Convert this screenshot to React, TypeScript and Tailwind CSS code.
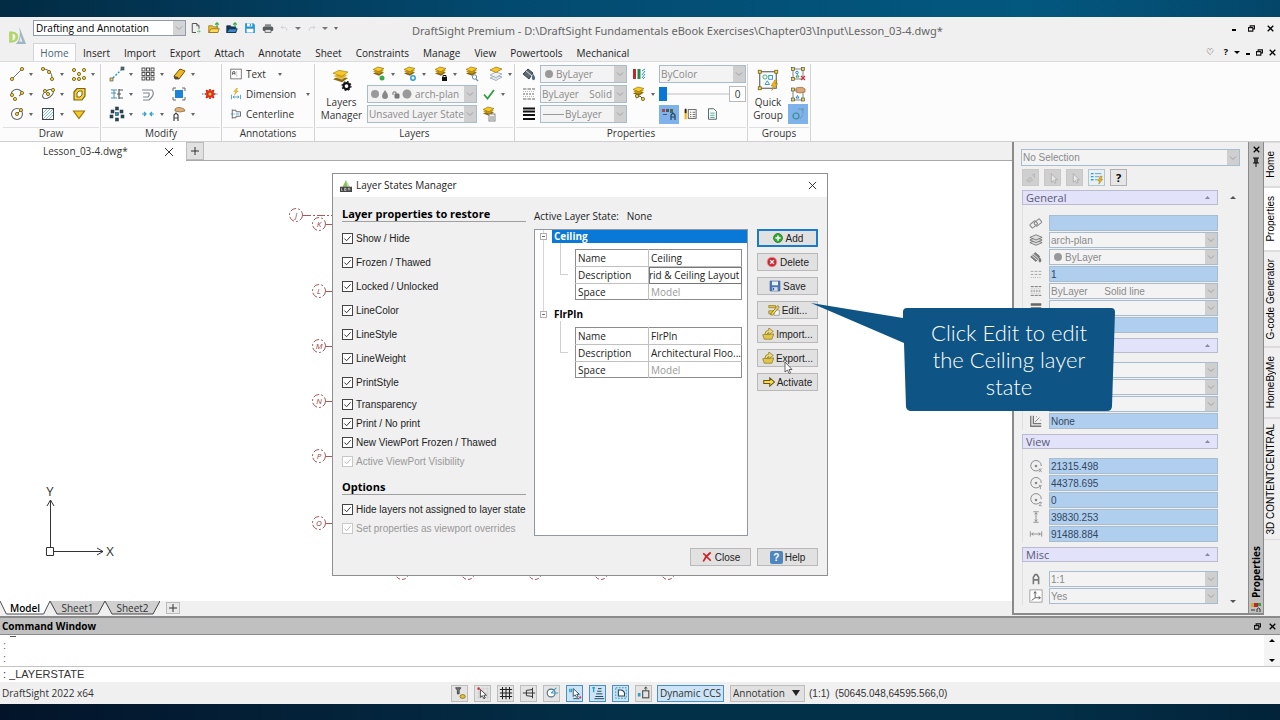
import React from 'react';
import clsx from 'clsx';

/* ---------- icons ---------- */

interface IconProps {
  name: string;
  className?: string;
}

const node = (x: number, y: number) => (
  <circle cx={x} cy={y} r="1.6" fill="#f3d34a" stroke="#75651c" strokeWidth="0.9" />
);

const sq = (x: number, y: number, fill = '#5b6b7a') => (
  <rect x={x} y={y} width="3" height="3" fill={fill} stroke="#34424e" strokeWidth="0.6" />
);

const stack = (
  <>
    <path d="M2 7.5 7 5l6 1.5-5 3.2z" fill="#8a6a10" />
    <path d="M2 5.5 7 3l6 1.5-5 3.2z" fill="#c9970f" />
    <path d="M2 3.5 7 1l6 1.5-5 3.2z" fill="#f6c927" stroke="#9a7410" strokeWidth="0.7" />
  </>
);

const icons: Record<string, React.ReactNode> = {
  line: <><path d="M3 13 13 3" stroke="#777" />{node(3, 13)}{node(13, 3)}</>,
  arc: <><path d="M3 3c6 0 9 4 9 9" stroke="#666" fill="none" />{node(3, 3)}{node(9, 6)}{node(12, 13)}</>,
  points: <>{node(3, 4)}{node(8, 8)}{node(13, 4)}{node(3, 13)}{node(8, 13)}{node(13, 12)}</>,
  polyline: <><path d="M3 10C0 5 8 1 12 5c2 3-1 4-2 5" stroke="#666" fill="none" strokeWidth="1.1" />{node(3, 9)}{node(13, 7)}{node(6, 13)}</>,
  ellipse: <><ellipse cx="8" cy="8" rx="6" ry="3.5" transform="rotate(-35 8 8)" fill="none" stroke="#555" strokeWidth="1.1" />{node(8, 8)}{node(13, 4)}{node(5, 5)}</>,
  polygon: <><path d="M3 6 6 2.5h8V10l-3 4H3z" fill="#f6cf3a" stroke="#7a6417" strokeWidth="1.2" /><path d="m6 7 2-2h3v4l-2 2H6z" fill="#fff" stroke="#7a6417" /></>,
  circle: <><circle cx="8" cy="8" r="5.5" fill="none" stroke="#666" strokeWidth="1.1" /><path d="m8 8 4-4" stroke="#555" />{node(8, 8)}{node(12, 4)}</>,
  hatch: <><rect x="2.5" y="2.5" width="11" height="11" fill="#fff" stroke="#444" /><path d="m3 7 4-4M3 10l7-7M3 13 13 3M6 13l7-7M9 13l4-4" stroke="#5cb4d8" strokeWidth="0.8" /></>,
  region: <path d="M2.5 5h11L8 12.5z" fill="#f6c927" stroke="#9a7410" strokeWidth="1.2" />,
  move: <><path d="m4 12 8-8" stroke="#2a8fd0" strokeDasharray="2 1.5" strokeWidth="1.4" />{sq(1, 12, '#f3d34a')}{sq(12, 1)}</>,
  pattern: <g fill="none" stroke="#444" strokeWidth="0.9">{[2, 6.5, 11].map((y) => [2, 6.5, 11].map((x) => <rect key={`${x}-${y}`} x={x} y={y} width="3" height="3" />))}</g>,
  eraser: <><path d="m3 10 6-7 5 2-6 8H4z" fill="#f2b91e" stroke="#6d5210" /><path d="m3 10 4 1 1 2H4z" fill="#4b4b4b" /></>,
  trim: <><path d="M10 3v10M10 4h4M10 12h4M8 8h4" stroke="#555" strokeWidth="1.2" /><path d="M2 4h6M2 7h5M2 12h6M5 4v8" stroke="#4a90b8" /></>,
  offset: <path d="M2 4h10q3 4-1 8l-2 2H3M3 7h6q1 2-1 4H3" fill="none" stroke="#7a858f" strokeWidth="1.1" />,
  stretch: <><rect x="4" y="4" width="8" height="8" fill="#1c83d6" /><path d="M2 5V2h3M11 2h3v3M14 11v3h-3M5 14H2v-3" fill="none" stroke="#666" /></>,
  explode: <><path d="M0 8h3M13 8h3" stroke="#2a6fb0" strokeWidth="1.2" strokeDasharray="1.5 1" /><path d="m8 3 1.2 2.2L12 4l-1 3 2 1-2 1 1 3-2.8-1.2L8 13l-1.2-2.2L4 12l1-3-2-1 2-1-1-3 2.8 1.2z" fill="#e22b17" stroke="#e22b17" /><circle cx="8" cy="8" r="1.5" fill="#f9d342" /></>,
  copy: <>{sq(6.5, 1, '#24435c')}{sq(2, 4, '#24435c')}{sq(11, 4, '#24435c')}{sq(6.5, 6.5, '#2a8fd0')}{sq(1, 9, '#24435c')}{sq(12, 9, '#24435c')}{sq(6.5, 12, '#24435c')}</>,
  join: <path d="M2 8h4M4 6l2 2-2 2M14 8h-4M12 6l-2 2 2 2" stroke="#2a9fc8" strokeWidth="1.2" fill="none" />,
  match: <><path d="M4 3c2-2 5-2 9 0l1 2-5 1-5-1z" fill="#e0b07c" stroke="#8f6638" strokeWidth="0.8" /><path d="M3 15V9l2-2 2 2v6M3 12h4" fill="none" stroke="#444" strokeWidth="1.2" /></>,
  text: <><rect x="1" y="1.5" width="14" height="13" fill="#fff" stroke="#555" /><path d="M3.5 9V5.5L5 4l1.5 1.5V9M3.5 7h3" fill="none" stroke="#333" /><path d="M9 4v8" stroke="#bbb" /></>,
  dimension: <><path d="m9 0-4 5h2.5L6 9l5-5H8.5L10 0z" fill="#f6c927" stroke="#b28912" strokeWidth="0.5" /><path d="M2 9v6M14 9v6M4 12h8M6 10.5 4 12l2 1.5M10 10.5l2 1.5-2 1.5" stroke="#2a8fd0" fill="none" /></>,
  centerline: <><path d="M3 2v12M3 3h5v2h6M3 13h5v-2h6V5" stroke="#555" fill="none" strokeWidth="1.1" /><path d="M1 8h14" stroke="#2a8fd0" strokeDasharray="4 1 1 1" /></>,
  layerOn: <>{stack}<circle cx="11" cy="12" r="2.5" fill="#3aa94a" /></>,
  layerCog: <>{stack}<circle cx="11" cy="12" r="2.2" fill="#fff" stroke="#2a9fd0" strokeWidth="1.5" /></>,
  layerLock: <>{stack}<rect x="9" y="11" width="5" height="4" fill="#111" /><path d="M10 11V9.500h3V11" stroke="#111" fill="none" /></>,
  layerFind: <>{stack}<circle cx="10.5" cy="11" r="2.2" fill="#fff" stroke="#6c8ca0" /><path d="m12 13 2 2" stroke="#6c8ca0" strokeWidth="1.2" /></>,
  layerCopy: <><path d="m2 12 6-3 6 2-6 3.5z" fill="#dfe5ea" stroke="#8d99a5" strokeWidth="0.7" /><path d="m2 9 6-3 6 2-6 3.5z" fill="#eef1f4" stroke="#8d99a5" strokeWidth="0.7" /><path d="m2 4 6-3 6 2-6 3.5z" fill="#f6c927" stroke="#9a7410" strokeWidth="0.7" /></>,
  layerSheet: <>{stack}<rect x="8" y="8" width="6" height="7" fill="#f4f4f4" stroke="#888" /><path d="M10 10v4M12 10v4" stroke="#888" /></>,
  layersBig: (
    <>
      <path d="M2 7.5 6 5.5l6 1.2-4 2.8z" fill="#8a6a10" />
      <path d="M2 5.5 6 3.5l6 1.2-4 2.8z" fill="#e3b11c" stroke="#fff" strokeWidth="0.3" />
      <path d="M2 3.5 6 1.5l6 1.2-4 2.8z" fill="#f6c927" stroke="#9a7410" strokeWidth="0.4" />
      <circle cx="11" cy="12" r="2" fill="none" stroke="#111" strokeWidth="1.5" />
      <circle cx="11" cy="12" r="3" fill="none" stroke="#111" strokeWidth="0.7" strokeDasharray="1.2 1.15" />
    </>
  ),
  check: <path d="m3 8.5 3.5 4L13 4" fill="none" stroke="#2f9e44" strokeWidth="1.8" />,
  bucket: <><path d="m2 8 5-5 5 4-4 6z" fill="#5f6b74" stroke="#3a444b" /><path d="m4 4 7 6" stroke="#dfe3e6" /><path d="M12 8c2 2 3 5 1 6s-3-3-1-6z" fill="#4a6f8c" /></>,
  bucketGrey: <><path d="m2 8 5-5 5 4-4 6z" fill="#858585" stroke="#666" /><path d="m4 4 7 6M3 6l7 6" stroke="#eee" /><path d="M12 8c2 2 3 5 1 6s-3-3-1-6z" fill="#777" /></>,
  lineStyle: <><path d="M2 3h12M2 13h12" stroke="#666" strokeDasharray="3.5 1" /><path d="M2 8h12" stroke="#666" strokeDasharray="2 1" /><path d="M2 5.5h12M2 10.5h12" stroke="#888" strokeWidth="0.6" strokeDasharray="1 1" /></>,
  lineScale: <><path d="M2 5h12M2 8.5h12" stroke="#999" strokeDasharray="3 1.5" /><path d="M2 12h12" stroke="#999" strokeDasharray="1 1.5" /></>,
  lineWeight: <path d="M2 2.5h12M2 5.5h12M2 9h12M2 13h12" stroke="#111" strokeWidth="2" />,
  weightGrey: <path d="M2 4h12M2 8.5h12M2 13h12" stroke="#666" strokeWidth="3" />,
  colors: <><path d="M3.5 3v10" stroke="#c1272d" strokeWidth="3" /><path d="M8 3v10" stroke="#248a4b" strokeWidth="3" /><path d="m11 5 3-2M11 9l3-4M11 12l3-4M12 13l2-2" stroke="#2a8fd0" /></>,
  layerNodes: <>{stack}<path d="m5 12 4-2 3 3" stroke="#555" fill="none" />{node(6, 10)}{node(12, 13)}</>,
  palette: <><path d="M5 3h3v3H5zM2 8h4v1H2z" fill="#4c5564" /><path d="M1 3h3v3H1z" fill="#a34a4a" /><path d="M9 3h3v4H9z" fill="#496b4b" /><path d="M10 14V9l2-2 2 2v5M10 11h4" fill="none" stroke="#24435c" strokeWidth="1.2" /></>,
  notes: <><path d="M3 3v11" stroke="#f0b913" strokeWidth="2.5" /><path d="M3 2v5" stroke="#222" strokeWidth="2" /><rect x="6" y="3" width="9" height="10" fill="#fff" stroke="#555" /><path d="M8 6h1.5M8 8.5h1.5M8 11h1.5M11 6h3M11 8.5h3M11 11h3" stroke="#555" /></>,
  page: <><path d="M4 2h6l3 3v9H4z" fill="#fff" stroke="#3a5a55" /><path d="M6 7h5M6 9.5h5M6 12h5" stroke="#3aa18d" /></>,
  group: (
    <>
      <rect x="2.5" y="2.5" width="11" height="11" fill="none" stroke="#555" strokeWidth="0.7" />
      <circle cx="6" cy="6" r="1.4" fill="none" stroke="#2fa36b" strokeWidth="0.6" />
      <rect x="8.5" y="5" width="2.5" height="2.5" fill="none" stroke="#2a8fd0" strokeWidth="0.6" />
      <path d="m6 11 1.5-2.5L9 11z" fill="none" stroke="#2a8fd0" strokeWidth="0.6" />
      <path d="m12.500 8-2.5 4h1.5l-1 3 4-4.5h-1.8L14 8z" fill="#f0b913" stroke="#8a6a10" strokeWidth="0.3" />
      {[[1.5, 1.5], [12.5, 1.5], [1.5, 12.5]].map(([x, y]) => (
        <rect key={`${x}-${y}`} x={x} y={y} width="2" height="2" fill="#f3d34a" stroke="#6d5a18" strokeWidth="0.5" />
      ))}
    </>
  ),
  ungroup: <><rect x="3" y="3" width="10" height="10" fill="none" stroke="#666" strokeWidth="0.8" />{sq(1.5, 1.5, '#f3d34a')}{sq(11.5, 1.5, '#f3d34a')}{sq(1.5, 11.5, '#f3d34a')}<circle cx="7" cy="6.5" r="1.3" fill="none" stroke="#2a8fd0" /><path d="m6 11 1.5-2.5L9 11z" fill="none" stroke="#2fa36b" /><path d="m11 10 4 4m0-4-4 4" stroke="#c8323c" strokeWidth="1.2" /></>,
  groupEdit: <><rect x="3" y="4" width="10" height="10" fill="none" stroke="#666" strokeWidth="0.8" />{sq(1.5, 2, '#f3d34a')}{sq(1.5, 12, '#f3d34a')}{sq(11.5, 12, '#f3d34a')}<path d="M6 2c4-1 7-1 9 1v3l-5 1-4-1z" fill="#dba77a" stroke="#8f6638" strokeWidth="0.7" /><path d="m6 12 1.5-2.5L9 12z" fill="none" stroke="#2a8fd0" /></>,
  groupToggle: <><circle cx="6" cy="10" r="3" fill="none" stroke="#3d8f8a" strokeWidth="1.2" /><path d="M8 3h5v5M13 9l-3 4" fill="none" stroke="#6c97b8" /><circle cx="12.5" cy="3.5" r="1.2" fill="#6c97b8" /></>,
  newFile: <><path d="M3 2h6l3 3v4M3 2v12h5" fill="none" stroke="#444" strokeWidth="1.2" /><path d="M9 2v3h3" fill="none" stroke="#444" /><path d="M12 10v5M9.5 12.5h5" stroke="#3aa94a" strokeDasharray="1.5 0.7" /></>,
  open: <><path d="M1 14V5h5l1 1.5h6V14z" fill="#f2c12e" stroke="#8d6a10" /><path d="m1 14 3-5h11l-2 5z" fill="#ffd95c" stroke="#8d6a10" /><path d="M12 7V1M9.5 3.5 12 1l2.5 2.5" stroke="#3aa94a" fill="none" strokeWidth="1.5" /></>,
  openBlue: <><path d="M1 14V5h5l1 1.5h6V14z" fill="#16385a" stroke="#0f2a44" /><path d="m1 14 3-5h11l-2 5z" fill="#3c88c8" stroke="#0f2a44" /><path d="M12 7V1M9.5 3.5 12 1l2.5 2.5" stroke="#3aa94a" fill="none" strokeWidth="1.5" /></>,
  save: <><path d="M1.5 1.5h11l2 2v11h-13z" fill="#2496dc" /><path d="M4 2h7v4H4zM3.5 9h9v5h-9z" fill="#fff" /><path d="M8.5 2.5v3" stroke="#2496dc" strokeWidth="1.5" /></>,
  print: <><path d="M4 3h8v3H4z" fill="#888" /><rect x="1" y="6" width="14" height="6" rx="2" fill="#555b63" /><path d="M4 10h8v4H4z" fill="#ddd" stroke="#555" /></>,
  undo: <path d="M5 3 2 6l3 3M2 6h7q4 1 3 6" fill="none" stroke="#cfcfcf" strokeWidth="1.6" />,
  redo: <path d="m11 3 3 3-3 3M14 6H7Q3 7 4 12" fill="none" stroke="#cfcfcf" strokeWidth="1.6" />,
  logo: <><path d="M1 4h3q6 1 5 6-1 4-8 4z" fill="#b4d56c" /><path d="M4 6q3 0 2.5 3.5Q6 12 4 12z" fill="#eef3e6" /><path d="M10 0 16 15H7q5-4 3-15z" fill="#9fb6c2" /><path d="m11 8 2 5h-3z" fill="#dfe8ee" /></>,
  dwg: <><path d="M8 0 3 10h9z" fill="#8cc152" /><path d="m8 0 6 10h-4z" fill="#c2d6c8" /><rect x="0" y="9" width="16" height="7" fill="#444" /><path d="M2 11v3h1.5M6 11v3h2v-3zM11 14v-3h2v3" stroke="#eee" strokeWidth="0.8" fill="none" /></>,
  add: <><circle cx="8" cy="8" r="6" fill="#35a535" stroke="#1f7a22" /><path d="M8 4.5v7M4.5 8h7" stroke="#fff" strokeWidth="2" /></>,
  remove: <><circle cx="8" cy="8" r="6.5" fill="#cc2a36" stroke="#e7a0a5" /><path d="m5.5 5.5 5 5m0-5-5 5" stroke="#fff" strokeWidth="1.8" /></>,
  saveDisk: <><path d="M1.5 1.5h13v13h-13z" fill="#4a78b8" stroke="#355c94" /><path d="M4 2h8v5H4z" fill="#e9f1fa" /><path d="M4.5 9.5h7v5h-7z" fill="#d4dbe3" /><path d="M6 10.5v3" stroke="#355c94" strokeWidth="1.5" /></>,
  edit: <><path d="M8 8h7v7H8z" fill="#f7f7f7" stroke="#888" /><path d="M1 2h9v3H1zM1 9h6v4H1z" fill="#e0c236" stroke="#8a7412" strokeWidth="0.8" /><path d="m3 14 10-12 2 2-9 11z" fill="#f3dc5a" stroke="#6d5a18" strokeWidth="0.9" /></>,
  transfer: <><path d="m1 9 2 6h10l3-7H5z" fill="#e2c64a" stroke="#85701c" strokeWidth="0.9" /><path d="M4 8q0-5 5-5V0l6 4.5L9 9V6Q7 6 7 9z" fill="#eedb72" stroke="#85701c" strokeWidth="0.9" /></>,
  activate: <path d="M1 6h8V2.5L15.500 8 9 13.500V10H1z" fill="#f8dc4c" stroke="#6a5612" strokeWidth="1.4" />,
  closeRed: <path d="M3 3q4 4 10 10M13 2Q7 6 3 14" stroke="#d01c25" strokeWidth="2.2" fill="none" />,
  linkGrey: <g transform="rotate(-40 8 8)" fill="none" stroke="#888" strokeWidth="1.2"><rect x="1" y="5" width="8" height="5" rx="1" /><rect x="6" y="6.5" width="8" height="5" rx="1" /></g>,
  layersGrey: <g stroke="#666" fill="#ddd" strokeWidth="0.9"><path d="m1 11 7-3 7 3-7 3z" /><path d="m1 8 7-3 7 3-7 3z" /><path d="m1 5 7-3 7 3-7 3z" /></g>,
  centerX: <><path d="M13 11a6 6 0 1 1 1-3" fill="none" stroke="#888" strokeWidth="1.1" /><circle cx="8" cy="8" r="1.5" fill="#888" /><path d="m11.5 11 3 4m0-4-3 4" stroke="#888" strokeWidth="0.9" /></>,
  centerY: <><path d="M13 11a6 6 0 1 1 1-3" fill="none" stroke="#888" strokeWidth="1.1" /><circle cx="8" cy="8" r="1.5" fill="#888" /><path d="m11.5 10 1.5 2.5 1.5-2.5M13 12v3" stroke="#888" strokeWidth="0.9" /></>,
  centerZ: <><path d="M13 10a6 6 0 1 1 1-3" fill="none" stroke="#888" strokeWidth="1.1" /><circle cx="8" cy="8" r="1.5" fill="#888" /><path d="M11.5 11h3l-3 3.5h3" stroke="#888" strokeWidth="0.9" /></>,
  heightGrey: <path d="M5 2h6M5 14h6M8 3v10M6.5 5 8 3l1.5 2M6.5 11 8 13l1.5-2" stroke="#888" fill="none" />,
  widthGrey: <path d="M1.5 5v6M14.5 5v6M3 8h10M5 6.5 3 8l2 1.5M11 6.5 13 8l-2 1.5" stroke="#888" fill="none" />,
  annoGrey: <path d="M5 14V6l2-3h2l2 3v8M5 9h6" stroke="#777" strokeWidth="1.8" fill="none" />,
  ccsGrey: <><rect x="1" y="1" width="14" height="14" fill="#fff" stroke="#999" /><path d="M7 3v7h6M7 10l-4 3M5.5 5 7 3l1.5 2M11 8.5l2 1.5-2 1.5" stroke="#555" fill="none" /></>,
  sheetGrey: <><path d="M2 2v12h12M5 2v9h9" stroke="#777" fill="none" strokeWidth="1.5" /><path d="m7 9 5-5M8 3h1M13 7h1" stroke="#777" /></>,
  cursorGrey: <path d="M6 3v10l2.5-2 1.5 3 1.500-.7L10 10h3z" fill="#e8e8e8" stroke="#aaa" />,
  pencilGrey: <path d="m3 11 4-4 3 3-4 3zM9 5l3-2v5" fill="#c6c6c6" stroke="#b4b4b4" />,
  listBolt: <><path d="M1 3h3M1 6.5h3M1 10h3" stroke="#2aa0c8" strokeWidth="1.5" /><path d="M5.5 3H13M5.5 6.5H11M5.5 10H9" stroke="#5f9fc0" /><path d="m12 6-3 5h2l-1 4 4.5-5.5h-2L14 6z" fill="#f0b913" stroke="#8a6a10" strokeWidth="0.5" /></>,
  stFilter: <><path d="M3 2h6l-2 3v4H5V5z" fill="#777" stroke="#444" /><ellipse cx="11" cy="12" rx="3" ry="2.2" fill="#e0c236" stroke="#8a7412" /></>,
  stSnap: <><path d="M3 1v14M8 1v14M13 1v14M1 3h14M1 8h14M1 13h14" stroke="#ccc" strokeWidth="0.7" /><circle cx="3" cy="3" r="1.5" fill="#d8323c" /><path d="M5 4v9l2.2-2L9 14.5l1.5-.8L9 10.5h3z" fill="#fff" stroke="#333" /></>,
  stGrid: <path d="M4 1v14M8 1v14M12 1v14M1 4h14M1 8h14M1 12h14" stroke="#222" strokeWidth="1.2" />,
  stOrtho: <path d="M12 2v12M12 4 5 5v6l7 1M1 8h14" stroke="#333" fill="none" strokeWidth="1.1" />,
  stPolar: <><circle cx="7" cy="8" r="4.5" fill="#fff" stroke="#4b6b80" strokeWidth="1.3" /><path d="M7 8h8M7 8l6-6" stroke="#2a9fc8" fill="none" strokeWidth="1.2" strokeDasharray="4 1" /></>,
  stEsnap: <><path d="M2 3v4M4 3v4" stroke="#2aa0c8" strokeWidth="1.5" /><path d="M6 3v9l2-2 2 3 1.5-.7-1.500-2.800h3z" fill="#fff" stroke="#24435c" /><path d="M6 14.5h7" stroke="#24435c" /><circle cx="14" cy="13" r="1.2" fill="#d8323c" /></>,
  stEtrack: <><path d="M3 2v5M1.5 2h3" stroke="#2aa0c8" strokeWidth="1.5" /><path d="M8 3h4M7 6h5M6 9h7M5 12h9M4 14.5h11" stroke="#24435c" strokeWidth="1.1" /></>,
  stQuick: <><path d="M2 2h12v12H2z" fill="none" stroke="#2a8fb8" strokeDasharray="2 1.5" /><path d="M5 4.5h3q4 1 4 4v3H5z" fill="#fff" stroke="#24435c" strokeWidth="1.2" /></>,
  stLweight: <><rect x="6.5" y="5.5" width="7" height="8" fill="none" stroke="#444" strokeWidth="1.2" /><path d="M10 1v4M8.5 3 10 1l1.5 2" stroke="#444" fill="none" /><path d="M1 8h3v4H1z" fill="#2aa0c8" /></>,
};

const Icon: React.FC<IconProps> = ({ name, className = 'size-4' }) => (
  <svg viewBox="0 0 16 16" fill="none" className={clsx('shrink-0', className)} aria-hidden="true">
    {icons[name]}
  </svg>
);

const Caret: React.FC<{ className?: string }> = ({ className = 'w-1 text-[#666]' }) => (
  <svg viewBox="0 0 4 3" preserveAspectRatio="none" className={clsx('h-[3px] shrink-0', className)} aria-hidden="true">
    <path d="M0 0h4L2 3z" fill="currentColor" />
  </svg>
);

const Chevron = () => (
  <svg viewBox="0 0 8 8" className="size-2" aria-hidden="true">
    <path d="m1 2.5 3 3 3-3" fill="none" stroke="#a0a0a0" />
  </svg>
);

const Cross: React.FC<{ className?: string; thin?: boolean }> = ({ className = 'size-2', thin }) => (
  <svg viewBox="0 0 10 10" className={className} aria-hidden="true">
    <path d="m1 1 8 8M9 1 1 9" stroke="currentColor" strokeWidth={thin ? 1 : 1.8} />
  </svg>
);

const Restore = () => (
  <svg viewBox="0 0 8 8" className="size-[7px]" aria-hidden="true">
    <path d="M2.5 2.5V1h5v3.5H6M.5 3h5v4h-5z" fill="none" stroke="#111" strokeWidth="1.3" />
  </svg>
);

/* ---------- shared controls ---------- */

interface ComboProps {
  label: string;
  value: string;
  className?: string;
  lead?: React.ReactNode;
}

const Combo: React.FC<ComboProps> = ({ label, value, className, lead }) => (
  <div className={clsx('flex items-stretch border border-[#a9bccd] bg-[#f3f3f3] text-[#8a8a8a]', className)}>
    {lead}
    <select aria-label={label} className="min-w-0 flex-1 appearance-none overflow-hidden bg-transparent pl-px outline-none">
      <option>{value}</option>
    </select>
    <span className="flex w-3 shrink-0 items-center justify-center bg-[#cfcfcf]">
      <Chevron />
    </span>
  </div>
);

const ToolButton: React.FC<{ icon: string; caret?: boolean; className?: string }> = ({ icon, caret, className = 'w-[31px]' }) => (
  <button type="button" aria-label={icon} className={clsx('flex h-5 items-center gap-1', className)}>
    <Icon name={icon} />
    {caret && <Caret />}
  </button>
);

const RibbonPanel: React.FC<{ title: string; className?: string; children: React.ReactNode }> = ({ title, className, children }) => (
  <section className={clsx('flex shrink-0 flex-col border-r border-[#d4d4d4]', className)}>
    <div className="flex h-[63px]">{children}</div>
    <h2 className="mx-px border-t border-[#e0e0e0] text-center leading-[11px]">{title}</h2>
  </section>
);

/* ---------- top ---------- */

const ribbonTabs = ['Home', 'Insert', 'Import', 'Export', 'Attach', 'Annotate', 'Sheet', 'Constraints', 'Manage', 'View', 'Powertools', 'Mechanical'];

const TitleBar = () => (
  <header className="flex border-b border-[#dcdcdc] bg-[#f0f0f0]">
    <div className="flex w-[33px] items-center justify-center">
      <Icon name="logo" className="mt-[-6px] size-[18px]" />
    </div>
    <div className="min-w-0 flex-1">
      <div className="flex h-[26px] items-start pt-[3px]">
        <div className="flex h-4 w-[153px] border border-[#8f9baa] bg-white text-[10px]">
          <select aria-label="Workspace" className="min-w-0 flex-1 appearance-none pl-[2px] outline-none">
            <option>Drafting and Annotation</option>
          </select>
          <span className="flex w-3 items-center justify-center bg-[#d4d4d4]"><Chevron /></span>
        </div>
        <div className="ml-1 flex h-4 w-[222px] items-center gap-[6px]">
          {['newFile', 'open', 'openBlue', 'save', 'print'].map((n) => (
            <button key={n} type="button" aria-label={n}><Icon name={n} className="size-3" /></button>
          ))}
          <button type="button" aria-label="undo"><Icon name="undo" className="size-[9px]" /></button>
          <Caret className="w-[6px] text-[#777]" />
          <button type="button" aria-label="redo"><Icon name="redo" className="size-[9px]" /></button>
          <Caret className="w-[6px] text-[#777]" />
          <Caret />
        </div>
        <h1 className="flex-1 truncate pt-[3px] font-['Noto_Sans'] text-[11px] leading-4 text-[#666]">
          DraftSight Premium - D:\DraftSight Fundamentals eBook Exercises\Chapter03\Input\Lesson_03-4.dwg*
        </h1>
        <div className="flex h-4 items-center gap-3 pr-[6px]">
          <button type="button" aria-label="Minimize" className="mt-1 h-[2px] w-1 bg-black" />
          <button type="button" aria-label="Restore"><Restore /></button>
          <button type="button" aria-label="Close"><Cross className="size-[7px]" /></button>
        </div>
      </div>
      <nav className="flex h-[18px] items-stretch text-[10px]">
        {ribbonTabs.map((tab, i) => (
          <button
            key={tab}
            type="button"
            className={clsx('pt-[2px]', i === 0 ? 'w-[43px] border border-b-0 border-[#d4d4d4] bg-[#fcfcfc] text-[#4a6478]' : 'px-[7px] text-[#222]')}
          >
            {tab}
          </button>
        ))}
        <div className="ml-auto flex items-center gap-[6px] pr-1 text-[9px] font-bold">
          <button type="button" aria-label="Favourites" className="mr-1 font-normal">♡</button>
          <button type="button">?</button>
          <Caret className="w-[6px] text-black" />
          <button type="button" aria-label="Minimize" className="mt-1 h-[2px] w-1 bg-black" />
          <button type="button" aria-label="Restore"><Restore /></button>
          <button type="button" aria-label="Close"><Cross className="size-[7px]" /></button>
        </div>
      </nav>
    </div>
  </header>
);

const annotationTools = [
  { icon: 'text', label: 'Text', caret: 'ml-3' },
  { icon: 'dimension', label: 'Dimension', caret: 'ml-auto' },
  { icon: 'centerline', label: 'Centerline', caret: '' },
];

const Ribbon = () => (
  <div className="flex h-20 border-b border-[#cfcfcf] bg-[#fcfcfc] pl-[2px] pt-[2px] text-[10px] text-[#333]">
    <RibbonPanel title="Draw" className="w-[99px]">
      <div className="grid h-[60px] grid-cols-[31px_31px_31px] pl-[7px]">
        <ToolButton icon="line" caret />
        <ToolButton icon="arc" caret />
        <ToolButton icon="points" caret />
        <ToolButton icon="polyline" caret />
        <ToolButton icon="ellipse" caret />
        <ToolButton icon="polygon" />
        <ToolButton icon="circle" caret />
        <ToolButton icon="hatch" caret />
        <ToolButton icon="region" />
      </div>
    </RibbonPanel>
    <RibbonPanel title="Modify" className="w-[121px]">
      <div className="grid h-[60px] grid-cols-[31px_31px_31px_16px] pl-2">
        <ToolButton icon="move" caret />
        <ToolButton icon="pattern" caret />
        <ToolButton icon="eraser" caret />
        <span />
        <ToolButton icon="trim" caret />
        <ToolButton icon="offset" />
        <ToolButton icon="stretch" />
        <ToolButton icon="explode" className="w-4" />
        <ToolButton icon="copy" caret />
        <ToolButton icon="join" caret />
        <ToolButton icon="match" caret />
      </div>
    </RibbonPanel>
    <RibbonPanel title="Annotations" className="w-[93px]">
      <div className="w-full pl-2 pr-1">
        {annotationTools.map((t) => (
          <button key={t.label} type="button" className="flex h-5 w-full items-center">
            <Icon name={t.icon} className="mr-1 size-3" />
            {t.label}
            {t.caret && <span className={t.caret}><Caret /></span>}
          </button>
        ))}
      </div>
    </RibbonPanel>
    <RibbonPanel title="Layers" className="w-[200px]">
      <button type="button" className="flex w-[52px] flex-col items-center pl-px pt-1 leading-[13px]">
        <Icon name="layersBig" className="mb-1 size-6" />
        <span>Layers</span>
        <span>Manager</span>
      </button>
      <div className="flex-1">
        <div className="flex pl-1">
          <ToolButton icon="layerOn" caret />
          <ToolButton icon="layerCog" caret />
          <ToolButton icon="layerLock" caret />
          <ToolButton icon="layerFind" className="w-6" />
          <ToolButton icon="layerCopy" caret className="w-6" />
        </div>
        <div className="flex h-5 items-center">
          <Combo
            label="Active layer"
            value="arch-plan"
            className="h-[18px] w-[110px]"
            lead={
              <svg viewBox="0 0 44 16" className="ml-[2px] w-11 shrink-0" aria-hidden="true">
                <circle cx="5" cy="8" r="4" fill="#999" />
                <path d="M15 4q3 4 3 6a3 3 0 0 1-6 0q0-2 3-6z" fill="#888" />
                <path d="M25 8h4v4h-4z" fill="#777" stroke="#777" /><path d="M23 9V6h3v2" fill="none" stroke="#777" />
                <circle cx="37" cy="8" r="4.5" fill="#999" />
              </svg>
            }
          />
          <ToolButton icon="check" caret className="ml-1 w-7" />
        </div>
        <div className="flex h-5 items-center">
          <Combo label="Layer state" value="Unsaved Layer State" className="h-[18px] w-[110px]" />
          <ToolButton icon="layerSheet" className="ml-1" />
        </div>
      </div>
    </RibbonPanel>
    <RibbonPanel title="Properties" className="w-[233px]">
      <div className="w-[25px] pl-[6px]">
        <ToolButton icon="bucket" className="w-4" />
        <ToolButton icon="lineStyle" className="w-4" />
        <ToolButton icon="lineWeight" className="w-4" />
      </div>
      <div className="flex w-[87px] flex-col gap-[2px] pt-px">
        <Combo label="Line color" value="ByLayer" className="h-[18px]" lead={<span className="my-auto ml-1 mr-[2px] size-2 rounded-full bg-[#999]" />} />
        <Combo label="Line style" value={'ByLayer\u00a0\u00a0\u00a0\u00a0Solid'} className="h-[18px]" />
        <Combo label="Line weight" value="ByLayer" className="h-[18px]" lead={<span className="my-auto ml-[2px] h-px w-[21px] bg-[#999]" />} />
      </div>
      <div className="w-8 pl-1">
        <ToolButton icon="colors" className="w-4" />
        <ToolButton icon="layerNodes" caret className="w-7" />
      </div>
      <div className="w-[87px]">
        <div className="flex h-5 items-center">
          <Combo label="Print style" value="ByColor" className="h-[18px] flex-1" />
        </div>
        <div className="flex h-5 items-center">
          <input
            type="range"
            aria-label="Transparency"
            defaultValue={0}
            className="h-[15px] w-[70px] appearance-none bg-[linear-gradient(#ddd,#ddd)] bg-[length:100%_2px] bg-center bg-no-repeat [&::-webkit-slider-thumb]:h-[14px] [&::-webkit-slider-thumb]:w-2 [&::-webkit-slider-thumb]:appearance-none [&::-webkit-slider-thumb]:bg-[#0a78d6]"
          />
          <input aria-label="Transparency value" defaultValue="0" className="h-4 w-[17px] border border-[#bbb] bg-white text-center" />
        </div>
        <div className="flex h-5 items-center gap-1">
          <button type="button" aria-label="Properties palette" className="flex h-[19px] w-5 items-center justify-center bg-[#7fb2ea]"><Icon name="palette" /></button>
          <button type="button" aria-label="Notes"><Icon name="notes" className="size-[14px]" /></button>
          <button type="button" aria-label="Page" className="ml-1"><Icon name="page" className="size-[14px]" /></button>
        </div>
      </div>
    </RibbonPanel>
    <RibbonPanel title="Groups" className="w-[63px]">
      <button type="button" className="flex w-10 flex-col items-center pt-1 leading-[13px]">
        <Icon name="group" className="mb-1 size-6" />
        <span>Quick</span>
        <span>Group</span>
      </button>
      <div className="w-5">
        <ToolButton icon="ungroup" className="w-5 justify-center" />
        <ToolButton icon="groupEdit" className="w-5 justify-center" />
        <ToolButton icon="groupToggle" className="w-5 justify-center bg-[#7fb2ea]" />
      </div>
    </RibbonPanel>
  </div>
);

/* ---------- drawing area ---------- */

const gridBubbles = [
  { id: 'J', x: 296, y: 54 },
  { id: 'K', x: 319, y: 63 },
  { id: 'L', x: 319, y: 130 },
  { id: 'M', x: 319, y: 185 },
  { id: 'N', x: 319, y: 240 },
  { id: 'P', x: 319, y: 295 },
  { id: 'O', x: 319, y: 362 },
];

const Canvas = () => (
  <div className="relative min-h-[440px] flex-1 overflow-hidden bg-white">
    <svg className="absolute inset-0 size-full" aria-hidden="true">
      {gridBubbles.map((b) => (
        <g key={b.id} stroke="#a85a5a" fill="none">
          <circle cx={b.x} cy={b.y} r="6.5" strokeDasharray="6 2 2 2" />
          <path d={`M${b.x + 7} ${b.y + 0.5}H334`} strokeDasharray="8 2 2 2" />
          <text x={b.x} y={b.y + 3} textAnchor="middle" stroke="none" fill="#a03c3c" className="text-[8px] italic">{b.id}</text>
        </g>
      ))}
      {[402, 468, 535, 601, 668].map((x) => (
        <circle key={x} cx={x} cy="412" r="6.5" stroke="#a85a5a" fill="none" strokeDasharray="4 2" />
      ))}
      <g stroke="#333" fill="none">
        <path d="M46.5 386.5h7v8h-7zM50.5 386V339M47 345l3.5-6 3.5 6M54 390.5h49M97 387l6 3.5-6 3.5" />
        <text x="50" y="335" textAnchor="middle" stroke="none" fill="#333" className="text-[13px]">Y</text>
        <text x="110" y="395" textAnchor="middle" stroke="none" fill="#333" className="text-[13px]">X</text>
      </g>
    </svg>
  </div>
);

const FileTabs = () => (
  <div className="flex h-[19px] shrink-0 border-b border-[#a9a9a9] bg-[#f0f0f0] text-[10px] text-[#333]">
    <div className="-mb-px flex w-[186px] items-center bg-white pl-[43px]">
      <span className="w-[121px]">Lesson_03-4.dwg*</span>
      <button type="button" aria-label="Close file"><Cross className="size-[10px]" thin /></button>
    </div>
    <button type="button" aria-label="New file" className="flex w-[18px] items-center justify-center border border-[#bcbcbc] bg-[#e1e1e1]">
      <svg viewBox="0 0 8 8" className="size-2"><path d="M4 0v8M0 4h8" stroke="#333" /></svg>
    </button>
  </div>
);

const SheetTabs = () => (
  <div className="flex h-[14px] shrink-0 items-start bg-[#f0f0f0] text-[10px] text-[#333]">
    {['Model', 'Sheet1', 'Sheet2'].map((name, i) => (
      <button key={name} type="button" className={clsx('relative h-[14px]', i === 0 ? 'w-[50px] font-semibold text-black' : 'w-[55px]')}>
        <svg viewBox="0 0 55 14" preserveAspectRatio="none" className="absolute inset-0 size-full" aria-hidden="true">
          <path d="M0 0 7 13h41l7-13" fill={i === 0 ? '#fff' : '#d0d0d0'} stroke="#444" />
        </svg>
        <span className="relative leading-[14px]">{name}</span>
      </button>
    ))}
    <button type="button" aria-label="Add sheet" className="ml-[6px] mt-px flex h-3 w-[14px] items-center justify-center border border-[#bcbcbc] bg-[#e8e8e8]">
      <svg viewBox="0 0 8 8" className="size-2"><path d="M4 0v8M0 4h8" stroke="#333" /></svg>
    </button>
  </div>
);

/* ---------- properties dock ---------- */

interface Row {
  icon: string;
  value: string;
  kind: 'combo' | 'input';
  dot?: boolean;
}

const sections: { id: string; title?: string; rows: Row[] }[] = [
  {
    id: 'general',
    title: 'General',
    rows: [
      { icon: 'linkGrey', value: '', kind: 'input' },
      { icon: 'layersGrey', value: 'arch-plan', kind: 'combo' },
      { icon: 'bucketGrey', value: 'ByLayer', kind: 'combo', dot: true },
      { icon: 'lineScale', value: '1', kind: 'input' },
      { icon: 'lineStyle', value: 'ByLayer\u00a0\u00a0\u00a0\u00a0\u00a0\u00a0Solid line', kind: 'combo' },
      { icon: 'weightGrey', value: '', kind: 'combo' },
      { icon: 'lineScale', value: '', kind: 'input' },
    ],
  },
  {
    id: 'print',
    rows: [
      { icon: 'layersGrey', value: '', kind: 'combo' },
      { icon: 'layersGrey', value: '', kind: 'combo' },
      { icon: 'layersGrey', value: '', kind: 'combo' },
      { icon: 'sheetGrey', value: 'None', kind: 'input' },
    ],
  },
  {
    id: 'view',
    title: 'View',
    rows: [
      { icon: 'centerX', value: '21315.498', kind: 'input' },
      { icon: 'centerY', value: '44378.695', kind: 'input' },
      { icon: 'centerZ', value: '0', kind: 'input' },
      { icon: 'heightGrey', value: '39830.253', kind: 'input' },
      { icon: 'widthGrey', value: '91488.884', kind: 'input' },
    ],
  },
  {
    id: 'misc',
    title: 'Misc',
    rows: [
      { icon: 'annoGrey', value: '1:1', kind: 'combo' },
      { icon: 'ccsGrey', value: 'Yes', kind: 'combo' },
    ],
  },
];

const dockTabs = [
  { label: 'Home', height: 'h-[45px]' },
  { label: 'Properties', height: 'h-16' },
  { label: 'G-code Generator', height: 'h-24' },
  { label: 'HomeByMe', height: 'h-[71px]' },
  { label: '3D CONTENTCENTRAL', height: 'h-[122px]' },
];

const PropertiesDock = () => (
  <aside className="flex w-[268px] shrink-0 bg-[#f0f0f0] text-[10px]">
    <div className="flex flex-1 flex-col border-b-2 border-l-2 border-[#8a8a8a] pl-[7px] pt-[7px]">
      <Combo label="Selection" value="No Selection" className="h-[17px] w-[219px] shrink-0 font-['Liberation_Sans']" />
      <div className="mt-[3px] flex gap-[5px] pl-px">
        {['pencilGrey', 'cursorGrey', 'cursorGrey', 'listBolt'].map((n, i) => (
          <button key={i} type="button" aria-label={n} className={clsx('flex size-[17px] items-center justify-center border', i < 3 ? 'border-[#c8c8c8] bg-[#cfcfcf]' : 'border-[#b4c4d0] bg-[#e8f0f4]')}>
            <Icon name={n} className="size-[14px]" />
          </button>
        ))}
        <button type="button" className="size-[17px] border border-[#b0b0b0] bg-[#e6e6e6] text-[11px] font-bold leading-[15px]">?</button>
      </div>
      <div className="mt-1 flex flex-1">
        <div className="w-[197px] pl-px">
          {sections.map((s) => (
            <section key={s.id} className="mb-1">
              <h3 className="flex h-[15px] items-center justify-between border border-[#b9bccd] bg-[#e2e2fb] px-[3px] text-[11px] font-medium leading-[13px] text-[#5a5a72]">
                <span>{s.title}</span>
                <Caret className="mr-1 w-[5px] rotate-180 text-[#8a8aa0]" />
              </h3>
              <div className={clsx("border-l border-[#e0e0e0] font-['Liberation_Sans']", s.id === 'general' ? 'pt-[10px]' : 'pt-[9px]')}>
                {s.rows.map((r, i) => (
                  <div key={i} className="flex h-[17px] items-start">
                    <span className="flex h-4 w-[26px] items-center justify-center"><Icon name={r.icon} className="size-[14px]" /></span>
                    {r.kind === 'combo' ? (
                      <Combo
                        label={`${s.id} ${i + 1}`}
                        value={r.value}
                        className="h-4 min-w-0 flex-1"
                        lead={r.dot && <span className="my-auto ml-1 mr-[2px] size-2 rounded-full bg-[#999]" />}
                      />
                    ) : (
                      <input
                        aria-label={`${s.id} ${i + 1}`}
                        defaultValue={r.value}
                        className="h-4 min-w-0 flex-1 border border-[#a9bccd] bg-[#b0ceee] pl-px text-[#33475e] outline-none"
                      />
                    )}
                  </div>
                ))}
              </div>
            </section>
          ))}
        </div>
        <div className="flex w-[30px] flex-col items-center justify-between pb-[10px] pt-[6px]">
          <Caret className="w-[6px] rotate-180 text-[#555]" />
          <Caret className="w-[6px] text-[#555]" />
        </div>
      </div>
    </div>
    <div className="flex w-4 flex-col items-center border-x border-b-2 border-[#8a8a8a] bg-[#c0c0c0] pb-px pt-1">
      <button type="button" aria-label="Close panel"><Cross className="size-[7px]" /></button>
      <svg viewBox="0 0 8 10" className="mt-1 h-[10px] w-2" aria-hidden="true"><path d="M1 1h6M1 6h6M4 6v4" stroke="#111" /><path d="M3 1v5M5 1v5" stroke="#111" strokeWidth="1.5" /></svg>
      <span className="mt-auto rotate-180 text-[10px] font-bold leading-[14px] [writing-mode:vertical-rl]">Properties</span>
      <svg viewBox="0 0 10 10" className="mt-1 size-[10px]" aria-hidden="true">
        <path d="M0 1h3v4H0z" fill="#e0a53a" /><path d="M3 1h4v4H3z" fill="#b02b2b" /><path d="M7 1h3v3H7z" fill="#3a9b4a" /><path d="M6 10V7l1.5-1L9 7v3M0 8h4" stroke="#333" fill="none" />
      </svg>
    </div>
    <nav className="w-[17px] font-['Liberation_Sans']">
      {dockTabs.map((t, i) => (
        <button
          key={t.label}
          type="button"
          className={clsx('flex w-full items-center justify-center border border-l-0 border-[#dcdcdc] pr-[2px]', i === 1 && 'bg-white', t.height)}
        >
          <span className="rotate-180 whitespace-nowrap leading-[14px] [writing-mode:vertical-rl]">{t.label}</span>
        </button>
      ))}
    </nav>
  </aside>
);

/* ---------- layer states dialog ---------- */

const Check: React.FC<{ label: string; disabled?: boolean; className: string }> = ({ label, disabled, className }) => (
  <label className={clsx('flex items-center gap-[3px] whitespace-nowrap', disabled ? 'text-[#999]' : 'text-[#222]', className)}>
    <span className="grid size-[11px] shrink-0 place-items-center">
      <input type="checkbox" defaultChecked disabled={disabled} className="col-start-1 row-start-1 size-[11px] appearance-none border border-[#444] bg-white disabled:border-[#c8c8c8]" />
      <svg viewBox="0 0 10 10" className="pointer-events-none col-start-1 row-start-1 size-[9px]" aria-hidden="true">
        <path d="m1.5 5 2.5 2.5 4.5-5" fill="none" stroke={disabled ? '#bbb' : '#333'} strokeWidth="1.1" />
      </svg>
    </span>
    {label}
  </label>
);

const restoreItems = ['Show / Hide', 'Frozen / Thawed', 'Locked / Unlocked', 'LineColor', 'LineStyle', 'LineWeight', 'PrintStyle'];

const layerStates = [
  { name: 'Ceiling', description: 'rid & Ceiling Layout', editing: true },
  { name: 'FlrPln', description: 'Architectural Floo...', editing: false },
];

const actions = [
  { icon: 'add', label: 'Add' },
  { icon: 'remove', label: 'Delete' },
  { icon: 'saveDisk', label: 'Save' },
  { icon: 'edit', label: 'Edit...' },
  { icon: 'transfer', label: 'Import...' },
  { icon: 'transfer', label: 'Export...' },
  { icon: 'activate', label: 'Activate' },
];

const DialogButton: React.FC<{ children: React.ReactNode; focus?: boolean }> = ({ children, focus }) => (
  <button
    type="button"
    className={clsx('flex h-[18px] w-[61px] items-center justify-center gap-[2px] bg-[#e1e1e1] text-[#222]', focus ? 'border-2 border-[#1a7bc8]' : 'border border-[#b9b9b9]')}
  >
    {children}
  </button>
);

const LayerStatesDialog = () => (
  <div role="dialog" aria-label="Layer States Manager" className="absolute left-[332px] top-[31px] w-[496px] border border-[#8f8f8f] bg-[#f0f0f0] text-[10px] text-[#222]">
    <div className="flex h-[23px] items-center bg-white pl-[7px] pr-[10px]">
      <Icon name="dwg" className="mr-1 size-3" />
      <span className="flex-1">Layer States Manager</span>
      <button type="button" aria-label="Close dialog"><Cross className="size-[9px]" thin /></button>
    </div>
    <div className="flex pl-[9px] pr-[9px]">
      <div className="w-[184px] pt-[9px]">
        <h2 className="h-4 border-b border-[#a0a0a0] text-[11px] font-bold leading-[15px] text-black">Layer properties to restore</h2>
        <div className="pt-1 font-['Liberation_Sans']">
          {restoreItems.map((l) => <Check key={l} label={l} className="h-6" />)}
          <Check label="Transparency" className="h-5" />
          <Check label="Print / No print" className="h-[19px]" />
          <Check label="New ViewPort Frozen / Thawed" className="h-[19px]" />
          <Check label="Active ViewPort Visibility" className="h-[19px]" disabled />
        </div>
        <h2 className="mt-2 h-4 border-b border-[#a0a0a0] text-[11px] font-bold leading-[15px] text-black">Options</h2>
        <div className="pt-[5px] font-['Liberation_Sans']">
          <Check label="Hide layers not assigned to layer state" className="h-[19px]" />
          <Check label="Set properties as viewport overrides" className="h-[19px]" disabled />
        </div>
      </div>
      <div className="ml-2 w-[214px] pt-3">
        <p className="h-5 leading-[14px]">Active Layer State:&nbsp;&nbsp; None</p>
        <div className="h-[307px] border border-[#8f98a3] bg-white">
          {layerStates.map((s, i) => (
            <div key={s.name} className="flex h-[78px]">
              <div className="flex w-[17px] justify-center">
                <div className={clsx('w-px bg-[#d8d8d8]', i === 0 ? 'h-full' : 'h-2')} />
                <span className="absolute mt-[3px] flex size-[7px] items-center justify-center border border-[#b0b0b0] bg-white">
                  <span className="h-px w-[3px] bg-[#666]" />
                </span>
              </div>
              <div className="flex-1">
                <h3 className={clsx('h-[13px] pl-[2px] font-bold leading-[13px]', i === 0 ? 'bg-[#0a78d7] text-white' : 'text-black')}>{s.name}</h3>
                <div className="flex">
                  <div className="ml-[8px] mr-[7px] h-8 w-2 border-b border-l border-[#d0d0d0]" />
                  <table className="mt-[6px] w-[167px] table-fixed border-collapse border border-[#8c8c8c] text-left">
                    <tbody>
                      <tr className="h-[17px] border-b border-[#c0c0c0]">
                        <th className="w-[73px] border-r border-[#c0c0c0] pl-[2px] font-normal leading-[14px]">Name</th>
                        <td className="pl-[2px] leading-[14px]">{s.name}</td>
                      </tr>
                      <tr className="h-[17px] border-b border-[#c0c0c0]">
                        <th className="border-r border-[#c0c0c0] pl-[2px] font-normal leading-[14px]">Description</th>
                        <td className={clsx('whitespace-nowrap leading-[14px]', s.editing ? 'outline -outline-offset-1 outline-[#777]' : 'pl-[2px]')}>{s.description}</td>
                      </tr>
                      <tr className="h-4">
                        <th className="border-r border-[#c0c0c0] pl-[2px] font-normal leading-[14px]">Space</th>
                        <td className="pl-[2px] leading-[14px] text-[#999]">Model</td>
                      </tr>
                    </tbody>
                  </table>
                </div>
              </div>
            </div>
          ))}
        </div>
      </div>
      <div className="ml-[9px] flex flex-col gap-[6px] pt-8 font-['Liberation_Sans']">
        {actions.map((a) => (
          <DialogButton key={a.label} focus={a.label === 'Add'}>
            <Icon name={a.icon} className="size-3" />
            {a.label}
          </DialogButton>
        ))}
      </div>
    </div>
    <div className="flex justify-end gap-[6px] pb-[9px] pr-[9px] pt-[10px] font-['Liberation_Sans']">
      <DialogButton><Icon name="closeRed" className="size-3" />Close</DialogButton>
      <DialogButton>
        <span className="flex size-[13px] items-center justify-center rounded-[2px] bg-[#4f86bf] text-[10px] font-bold text-white">?</span>
        Help
      </DialogButton>
    </div>
  </div>
);

const Callout = () => (
  <div className="absolute left-[811px] top-[161px] h-[109px] w-[304px]">
    <svg viewBox="0 0 304 109" className="absolute inset-0 size-full" aria-hidden="true">
      <path d="M0 0 92 15V9q0-4 4-4h204q4 0 4 4l-3 94q0 5-5 5H100q-4 0-5-4L93 40z" fill="#0e5484" />
    </svg>
    <p className="relative ml-[92px] pt-[16px] text-center font-['Lato'] text-[22px] font-light leading-[27px] text-white">
      Click Edit to edit<br />the Ceiling layer<br />state
    </p>
  </div>
);

const Pointer = () => (
  <svg viewBox="0 0 9 14" className="absolute left-[784px] top-[219px] h-[14px] w-[9px]" aria-hidden="true">
    <path d="M1 1v10l2.5-2L5 12.5l1.5-.7L5 8.5h3z" fill="#fff" stroke="#444" strokeWidth="0.8" />
  </svg>
);

/* ---------- bottom ---------- */

const CommandWindow = () => (
  <section className="border-t-2 border-[#8a8a8a] bg-white">
    <div className="flex h-[17px] items-center border-b border-[#8a8a8a] bg-[#c0c0c0] pl-[2px] pr-1 text-[10px] font-bold text-black">
      <h2 className="flex-1">Command Window</h2>
      <button type="button" aria-label="Float" className="mr-2"><Restore /></button>
      <button type="button" aria-label="Close command window"><Cross className="size-[7px]" /></button>
    </div>
    <div className="flex h-8 justify-between border-b border-[#c4c4c4] pl-[3px] font-['Liberation_Sans'] text-[11px] leading-[13px] text-[#666]">
      <div className="relative pt-1">
        <span className="absolute left-[7px] top-px h-px w-[6px] bg-[#555]" />
        <p>:</p>
        <p>:</p>
      </div>
      <div className="flex w-4 flex-col items-center justify-between bg-[#f4f4f4] py-1">
        <Caret className="w-[6px] rotate-180 text-black" />
        <Caret className="w-[6px] text-black" />
      </div>
    </div>
    <div className="flex h-[15px] items-center pb-px pl-[3px] font-['Liberation_Sans'] text-[11px] text-[#333]">
      <label htmlFor="command" className="pr-[3px]">:</label>
      <input id="command" defaultValue="_LAYERSTATE" className="h-[14px] flex-1 outline-none" />
    </div>
  </section>
);

const statusToggles = [
  { icon: 'stFilter', on: false },
  { icon: 'stSnap', on: false },
  { icon: 'stGrid', on: false },
  { icon: 'stOrtho', on: false },
  { icon: 'stPolar', on: false },
  { icon: 'stEsnap', on: true },
  { icon: 'stEtrack', on: true },
  { icon: 'stQuick', on: true },
  { icon: 'stLweight', on: false },
];

const StatusBar = () => (
  <footer className="flex h-[22px] items-center bg-[#f0f0f0] text-[10px] text-[#333]">
    <span className="w-[451px] pl-[2px]">DraftSight 2022 x64</span>
    <div className="flex gap-[6px]">
      {statusToggles.map((t) => (
        <button
          key={t.icon}
          type="button"
          aria-label={t.icon}
          aria-pressed={t.on}
          className={clsx('flex size-[17px] items-center justify-center border', t.on ? 'border-[#4c8fc4] bg-[#cce4f7]' : 'border-[#bdbdbd] bg-[#e4e4e4]')}
        >
          <Icon name={t.icon} className="size-[14px]" />
        </button>
      ))}
    </div>
    <button type="button" className="ml-[5px] h-[17px] w-[67px] border border-[#4c8fc4] bg-[#cce4f7] leading-[15px]">Dynamic CCS</button>
    <div className="ml-[6px] flex h-[17px] w-[75px] items-center border border-[#bdbdbd] bg-[#e1e1e1] pr-1">
      <select aria-label="Annotation scale" className="min-w-0 flex-1 appearance-none pl-[2px] outline-none"><option>Annotation</option></select>
      <svg viewBox="0 0 8 6" className="h-[6px] w-2" aria-hidden="true"><path d="M0 0h8L4 6z" fill="#222" /></svg>
    </div>
    <span className="ml-1 whitespace-pre font-['Liberation_Sans']">(1:1)  (50645.048,64595.566,0)</span>
  </footer>
);

export default function App() {
  return (
    <div className="flex min-h-screen flex-col bg-[#f0f0f0] font-['Open_Sans','Noto_Sans',sans-serif]">
      <div className="h-[17px] bg-[linear-gradient(90deg,#022b44,#034a70_40%,#035880_80%,#04466a)]" />
      <TitleBar />
      <Ribbon />
      <main className="relative flex flex-1 pb-px">
        <div className="flex min-w-0 flex-1 flex-col bg-[#f0f0f0]">
          <FileTabs />
          <Canvas />
          <SheetTabs />
        </div>
        <PropertiesDock />
        <LayerStatesDialog />
        <Pointer />
        <Callout />
      </main>
      <CommandWindow />
      <StatusBar />
      <div className="h-[17px] bg-[linear-gradient(90deg,#03142a,#033049_50%,#033049_80%,#022339)]" />
    </div>
  );
}
